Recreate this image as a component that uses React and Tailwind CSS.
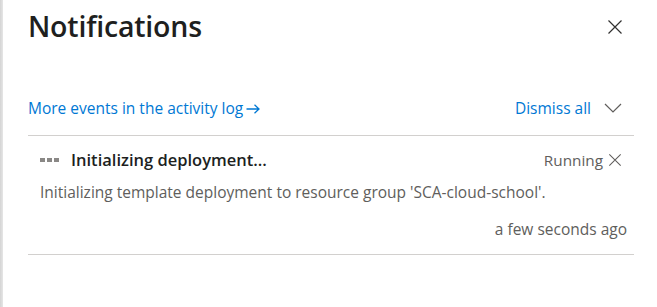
import React from "react";

function CloseIcon({ className }) {
  return (
    <svg viewBox="0 0 16 16" className={className} fill="none" stroke="currentColor" strokeWidth="1.2">
      <path d="M1.5 1.5L14.5 14.5M14.5 1.5L1.5 14.5" />
    </svg>
  );
}

export default function App() {
  return (
    <div className="flex h-[307px] w-[657px] bg-white" style={{ fontFamily: '"Open Sans", "Noto Sans", sans-serif' }}>
      <div className="w-[3px] bg-gradient-to-r from-[#d4d4d4] to-[#e6e6e6]" />
      <div className="flex flex-1 flex-col pl-[25px] pr-[23px]">
        {/* header */}
        <div className="flex items-center justify-between pt-[6px]">
          <h1 className="text-[28.5px] font-semibold leading-[40px] text-[#201f1e] tracking-[-0.2px]">
            Notifications
          </h1>
          <button className="mr-[11px] mt-[2px] text-[#323130]">
            <CloseIcon className="h-[16px] w-[16px]" />
          </button>
        </div>

        {/* actions */}
        <div className="mt-[52px] flex items-center justify-between text-[15.5px] leading-[20px] text-[#0078d4]">
          <a className="flex items-center">
            More events in the activity log
            <svg viewBox="0 0 14 10" className="ml-[3px] mt-[2px] h-[10px] w-[14px]" fill="none" stroke="currentColor" strokeWidth="1.3">
              <path d="M0.5 5h12.5M8.5 0.8L13 5l-4.5 4.2" />
            </svg>
          </a>
          <div className="flex items-center">
            <span>Dismiss all</span>
            <svg viewBox="0 0 18 10" className="ml-[13px] mr-[12px] h-[10px] w-[18px] text-[#605e5c]" fill="none" stroke="currentColor" strokeWidth="1.2">
              <path d="M1 1l8 8 8-8" />
            </svg>
          </div>
        </div>

        <div className="mt-[17px] h-px bg-[#d2d0ce]" />

        {/* notification */}
        <div className="flex flex-col pl-[12px] pr-[7px] pt-[13px] pb-[15px]">
          <div className="flex items-center justify-between">
            <div className="flex items-center">
              <div className="flex gap-[2px]">
                <span className="h-[4px] w-[5px] bg-[#8a8886]" />
                <span className="h-[4px] w-[5px] bg-[#8a8886]" />
                <span className="h-[4px] w-[5px] bg-[#8a8886]" />
              </div>
              <span className="ml-[12px] text-[16.5px] font-semibold leading-[22px] text-[#201f1e]">
                Initializing deployment...
              </span>
            </div>
            <div className="mr-[5px] flex items-center text-[15.3px] leading-[20px] text-[#605e5c]">
              <span>Running</span>
              <CloseIcon className="ml-[5px] h-[14px] w-[14px]" />
            </div>
          </div>
          <p className="mt-[11px] text-[15.5px] leading-[20px] text-[#605e5c]">
            Initializing template deployment to resource group 'SCA-cloud-school'.
          </p>
          <p className="mt-[17px] self-end text-[15.5px] leading-[20px] text-[#605e5c]">
            a few seconds ago
          </p>
        </div>

        <div className="h-px bg-[#d2d0ce]" />
      </div>
    </div>
  );
}
